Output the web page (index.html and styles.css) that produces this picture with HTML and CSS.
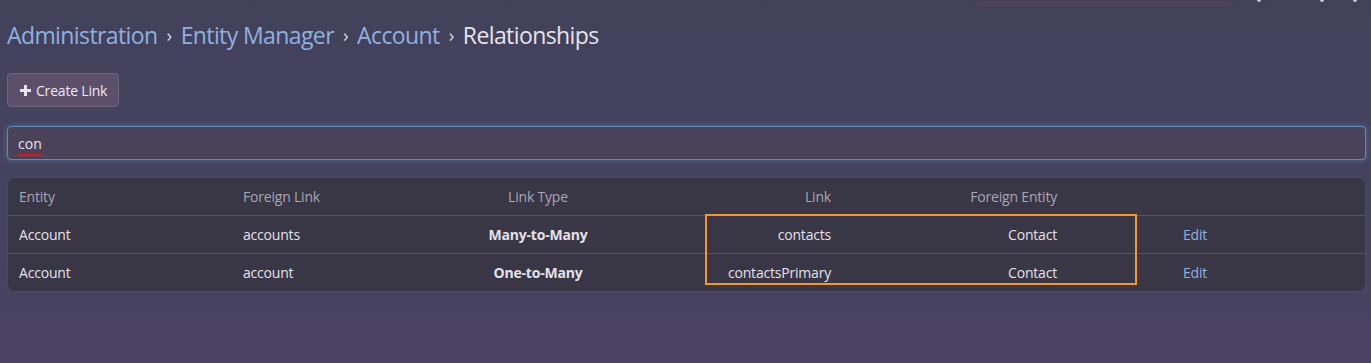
FILE: index.html
```html
<!DOCTYPE html>
<html lang="en">
<head>
  <meta charset="UTF-8">
  <title>Relationships</title>
  <link rel="stylesheet" href="styles.css">
</head>
<body>
  <!-- top navbar (scrolled, only the bottom edge shows) -->
  <div class="navbar">
    <div class="global-search"></div>
    <div class="nav-icons">
      <span class="dot"></span>
      <span class="dot wide-gap"></span>
      <span class="dot"></span>
    </div>
  </div>

  <div class="page">
    <h1 class="breadcrumb">
      <a href="#">Administration</a>
      <span class="sep">›</span>
      <a href="#">Entity Manager</a>
      <span class="sep">›</span>
      <a href="#">Account</a>
      <span class="sep">›</span>
      <span class="current">Relationships</span>
    </h1>

    <div class="actions">
      <button class="btn">
        <svg class="plus" width="13" height="13" viewBox="0 0 13 13">
          <path d="M6.5 1v11M1 6.5h11" stroke="currentColor" stroke-width="3"/>
        </svg>
        Create Link
      </button>
    </div>

    <div class="search">
      <span class="typed">con</span>
    </div>

    <div class="list-wrap">
      <div class="list">
        <div class="row head">
          <div class="cell">Entity</div>
          <div class="cell">Foreign Link</div>
          <div class="cell center">Link Type</div>
          <div class="cell right">Link</div>
          <div class="cell right">Foreign Entity</div>
          <div class="cell"></div>
          <div class="cell"></div>
        </div>
        <div class="row">
          <div class="cell">Account</div>
          <div class="cell">accounts</div>
          <div class="cell center bold">Many-to-Many</div>
          <div class="cell right">contacts</div>
          <div class="cell right">Contact</div>
          <div class="cell"></div>
          <div class="cell"><a href="#">Edit</a></div>
        </div>
        <div class="row">
          <div class="cell">Account</div>
          <div class="cell">account</div>
          <div class="cell center bold">One-to-Many</div>
          <div class="cell right">contactsPrimary</div>
          <div class="cell right">Contact</div>
          <div class="cell"></div>
          <div class="cell"><a href="#">Edit</a></div>
        </div>
      </div>
      <!-- highlight box drawn over the matching columns -->
      <div class="highlight"></div>
    </div>
  </div>
</body>
</html>
```

FILE: styles.css
```css
body {
  margin: 0;
  min-height: 100vh;
  font-family: "Open Sans", Arial, sans-serif;
  font-size: 14px;
  color: #e4e2e8;
  background: linear-gradient(180deg, #42415a 0%, #464360 60%, #4a4262 100%);
}

a {
  color: #8fb1e0;
  text-decoration: none;
}

.navbar {
  height: 7px;
  display: flex;
  justify-content: flex-end;
  align-items: flex-start;
  padding-right: 14px;
}

.global-search {
  width: 259px;
  height: 7px;
  background: #4b4458;
  border-radius: 0 0 5px 5px;
}

.nav-icons {
  display: flex;
  gap: 29px;
  margin-left: 24px;
}

.dot {
  width: 4px;
  height: 2px;
  background: #cfcbd6;
  border-radius: 0 0 2px 2px;
}

.dot.wide-gap {
  margin-left: 30px;
}

.page {
  padding: 0 5px 0 7px;
}

.breadcrumb {
  margin: 12px 0 0;
  font-size: 23px;
  font-weight: 400;
  line-height: 32px;
  display: flex;
  gap: 9px;
  letter-spacing: -0.6px;
}

.breadcrumb .sep {
  color: #d9d7de;
  font-size: 19px;
}

.breadcrumb .current {
  color: #e6e4ea;
}

.actions {
  margin-top: 22px;
}

.btn {
  display: flex;
  align-items: center;
  gap: 4px;
  height: 34px;
  padding: 0 11px;
  font-family: inherit;
  font-size: 14px;
  letter-spacing: -0.2px;
  color: #eceaf0;
  background: #5b4f6c;
  border: 1px solid #6f6582;
  border-radius: 4px;
  cursor: pointer;
}

.plus {
  color: #e6e4ea;
}

.search {
  margin-top: 19px;
  height: 34px;
  box-sizing: border-box;
  padding: 0 10px;
  display: flex;
  align-items: center;
  background: #4a4259;
  border: 1px solid #5d8cb4;
  border-radius: 4px;
  box-shadow: 0 0 6px rgba(100, 160, 210, 0.45);
  font-size: 14px;
  color: #e6e4ea;
}

.typed {
  text-decoration: underline solid #e01818;
  text-decoration-thickness: 2px;
  text-underline-offset: 5px;
}

.list-wrap {
  position: relative;
  margin-top: 17px;
}

.list {
  background: #393646;
  border: 1px solid #4f4a5e;
  border-radius: 8px;
  overflow: hidden;
}

.row {
  display: grid;
  grid-template-columns: 224px 224px 164px 222px 226px 104px 1fr;
  height: 37px;
  align-items: center;
  border-top: 1px solid #5c5556;
  letter-spacing: -0.2px;
}

.row.head {
  border-top: none;
  color: #a9a6b2;
}

.cell {
  padding: 0 11px;
  white-space: nowrap;
}

.center {
  text-align: center;
}

.right {
  text-align: right;
}

.bold {
  font-weight: 700;
}

.highlight {
  position: absolute;
  left: 698px;
  top: 37px;
  width: 428px;
  height: 67px;
  border: 2px solid #f7962d;
  pointer-events: none;
}
```
